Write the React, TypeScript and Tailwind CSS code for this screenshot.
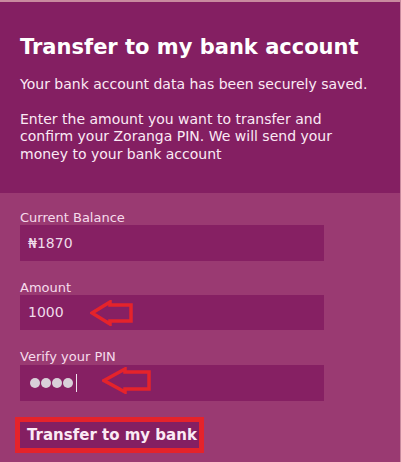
import React from 'react';

// Small outlined red arrow used as an annotation over the inputs
function RedArrow({ w, h }: { w: number; h: number }) {
  const head = Math.round(w * 0.46);
  const t1 = Math.round(h * 0.2);
  const t2 = Math.round(h * 0.8);
  return (
    <svg width={w} height={h} viewBox={`0 0 ${w} ${h}`} fill="none">
      <path
        d={`M2 ${h / 2} L${head} 2 L${head} ${t1} L${w - 2} ${t1} L${w - 2} ${t2} L${head} ${t2} L${head} ${h - 2} Z`}
        stroke="#e5232b"
        strokeWidth="3.5"
        strokeLinejoin="miter"
      />
    </svg>
  );
}

export default function App() {
  return (
    <div className="w-[401px] h-[462px] bg-[#c98a9f] pt-[2px] pr-[1px] overflow-hidden" style={{ fontFamily: '"DejaVu Sans", Verdana, sans-serif' }}>
      <div className="w-[400px] h-[460px] flex flex-col">
        {/* Header */}
        <div className="bg-[#841f62] h-[191px] px-[20px] pt-[33px] text-[#fbeaf5]">
          <h1 className="text-[21px] font-bold leading-[24px] text-white">Transfer to my bank account</h1>
          <p className="text-[14px] leading-[17.5px] mt-[17px]">Your bank account data has been securely saved.</p>
          <p className="text-[14px] leading-[17.5px] mt-[17px] w-[330px]">
            Enter the amount you want to transfer and confirm your Zoranga PIN. We will send your money to your bank account
          </p>
        </div>

        {/* Form */}
        <div className="flex-1 bg-[#9a3a72] px-[20px] pt-[17px] text-[#f6dcec]">
          <div className="text-[13px] leading-[15px]">Current Balance</div>
          <div className="w-[304px] h-[36px] bg-[#862063] flex items-center px-[8px] text-[14px] text-[#efdcea]">₦1870</div>

          <div className="mt-[19px] text-[13px] leading-[15px]">Amount</div>
          <div className="w-[304px] h-[35px] bg-[#862063] flex items-center px-[8px] text-[14px] text-[#efdcea] relative">
            1000
            <div className="absolute left-[70px] top-[5px]">
              <RedArrow w={43} h={26} />
            </div>
          </div>

          <div className="mt-[19px] text-[13px] leading-[15px]">Verify your PIN</div>
          <div className="mt-[1px] w-[304px] h-[36px] bg-[#862063] flex items-center px-[10px] relative">
            <div className="flex gap-[1px]">
              <span className="w-[10px] h-[10px] rounded-full bg-[#d9d0d9]" />
              <span className="w-[10px] h-[10px] rounded-full bg-[#d9d0d9]" />
              <span className="w-[10px] h-[10px] rounded-full bg-[#d9d0d9]" />
              <span className="w-[10px] h-[10px] rounded-full bg-[#d9d0d9]" />
            </div>
            <span className="ml-[3px] w-[1px] h-[18px] bg-[#efe3ee]" />
            <div className="absolute left-[82px] top-[2px]">
              <RedArrow w={49} h={27} />
            </div>
          </div>

          <div className="mt-[16px] ml-[-5px] w-[189px] h-[36px] border-[5px] border-[#e5232b] bg-[#841f62] flex items-center pl-[7px]">
            <span className="text-[15px] font-bold text-[#fbeaf5] leading-none">Transfer to my bank</span>
          </div>
        </div>
      </div>
    </div>
  );
}
